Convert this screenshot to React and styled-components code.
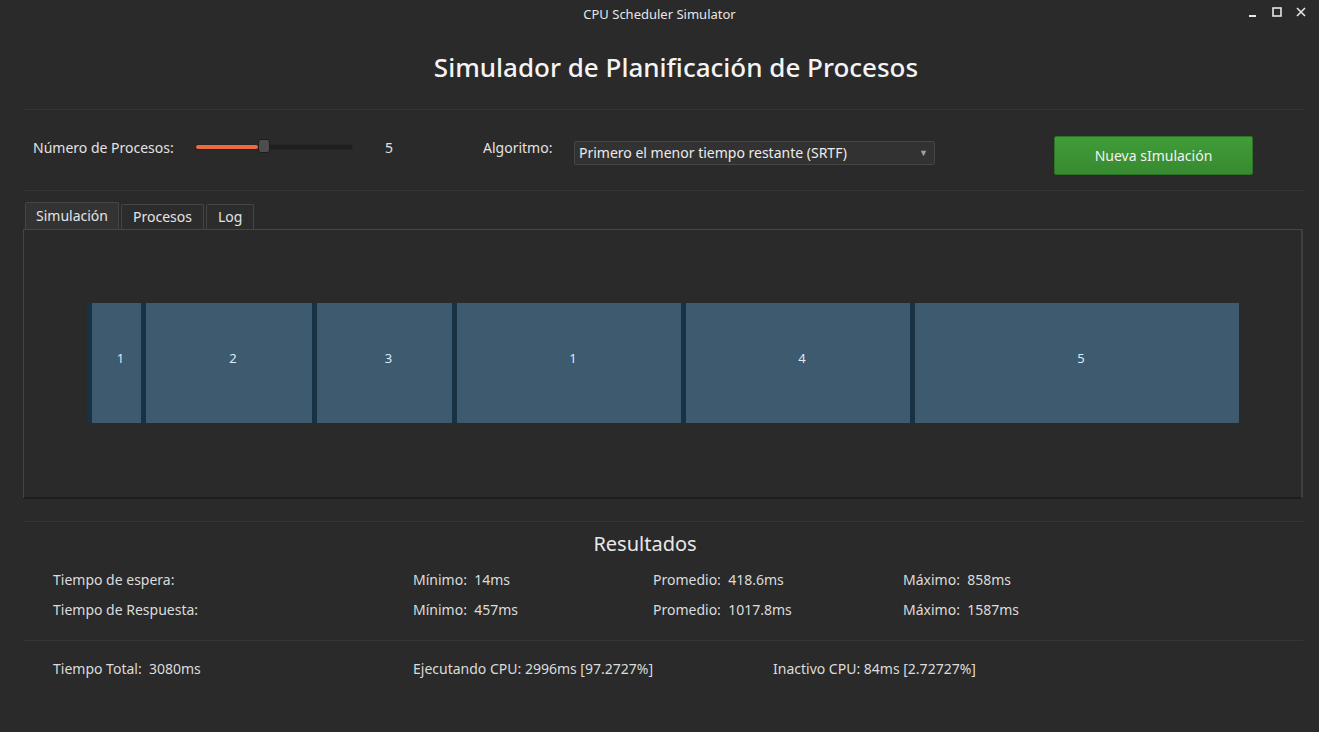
import React from 'react';
import styled, {createGlobalStyle} from 'styled-components';

const Global = createGlobalStyle`
body {
  margin: 0;
  background: #2a2a2a;
  font-family: "Noto Sans", "Open Sans", sans-serif;
  color: #dcdcdc;
}
`;

const Window = styled.div`
width: 1319px;
height: 732px;
background: #2a2a2a;
display: flex;
flex-direction: column;
overflow: hidden;
`;

const TitleBar = styled.div`
height: 28px;
display: flex;
align-items: center;
justify-content: center;
position: relative;
font-size: 13px;
color: #e6e6e6;
`;

const Controls = styled.div`
position: absolute;
right: 12px;
top: 6px;
display: flex;
gap: 12px;
align-items: center;
`;

const Content = styled.div`
flex: 1;
display: flex;
flex-direction: column;
padding: 0 16px 0 23px;
`;

const Heading = styled.h1`
margin: 0;
height: 81px;
padding: 0 0 4px 26px;
box-sizing: border-box;
display: flex;
align-items: center;
justify-content: center;
font-size: 26px;
font-weight: 500;
color: #f4f4f4;
`;

const Separator = styled.div`
height: 1px;
background: #353535;
`;

const ControlRow = styled.div`
height: 80px;
padding-bottom: 6px;
box-sizing: border-box;
display: flex;
align-items: center;
font-size: 14px;
`;

const Label = styled.span`
margin-left: ${p => p.$ml || 0}px;
width: ${p => p.$w ? p.$w + 'px' : 'auto'};
color: #e2e2e2;
`;

const SliderTrack = styled.div`
position: relative;
width: 156px;
height: 4px;
background: #1e1e1e;
border: 1px solid #262626;
border-radius: 2px;
`;

const SliderFill = styled.div`
height: 100%;
background: #ec6a3f;
border-radius: 2px;
`;

const SliderHandle = styled.div`
position: absolute;
top: -6px;
width: 12px;
height: 14px;
background: #4d4d4d;
border: 1px solid #1c1c1c;
border-radius: 3px;
box-sizing: border-box;
`;

const Select = styled.div`
width: 361px;
height: 24px;
margin: 11px 0 0 -2px;
box-sizing: border-box;
background: #323232;
border: 1px solid #464646;
border-radius: 2px;
display: flex;
align-items: center;
justify-content: space-between;
padding: 0 6px 0 4px;
color: #ececec;
`;

const Arrow = styled.span`
font-size: 9px;
color: #a0a0a0;
`;

const Button = styled.div`
margin: 17px 50px 0 auto;
width: 199px;
height: 39px;
box-sizing: border-box;
background: linear-gradient(#419c38, #378a30);
border: 1px solid #2c7526;
border-radius: 2px;
display: flex;
align-items: center;
justify-content: center;
color: #f2f2f2;
`;

const TabBar = styled.div`
margin-top: 10px;
height: 28px;
display: flex;
align-items: flex-end;
gap: 2px;
padding-left: 2px;
`;

const Tab = styled.div`
height: ${p => p.$active ? 27 : 25}px;
padding: 0 ${p => p.$pad}px 2px;
box-sizing: border-box;
display: flex;
align-items: center;
font-size: 14px;
background: ${p => p.$active ? '#333333' : '#2c2c2c'};
border: 1px solid #454545;
border-bottom: none;
border-radius: 2px 2px 0 0;
color: #e4e4e4;
`;

const Panel = styled.div`
height: 270px;
box-sizing: border-box;
border: 1px solid #464646;
border-bottom: 2px solid #1d1d1d;
border-right: 2px solid #3f3f3f;
display: flex;
align-items: center;
padding-left: 63px;
`;

const Gantt = styled.div`
display: flex;
height: 120px;
margin-top: -1px;
`;

const Block = styled.div`
height: 100%;
box-sizing: border-box;
border-left: 5px solid #183244;
background: #3d5a6e;
display: flex;
align-items: center;
justify-content: center;
padding: 0 0 10px 8px;
font-size: 13px;
color: #dbeaf6;
`;

const Results = styled.div`
margin-top: 22px;
`;

const SubHeading = styled.div`
height: 42px;
padding-right: 36px;
display: flex;
align-items: center;
justify-content: center;
font-size: 20px;
color: #e8e8e8;
`;

const StatRow = styled.div`
height: 30px;
display: grid;
grid-template-columns: 360px 240px 250px 1fr;
align-items: center;
padding-left: 30px;
font-size: 14px;
`;

const Spacer = styled.div`
height: 16px;
`;

const BottomRow = styled.div`
height: 54px;
display: grid;
grid-template-columns: 360px 360px 1fr;
align-items: center;
padding-left: 30px;
font-size: 14px;
`;

const blocks = [
  {id: 1, w: 54},
  {id: 2, w: 171},
  {id: 3, w: 140},
  {id: 1, w: 229},
  {id: 4, w: 229},
  {id: 5, w: 329},
];

const stats = [
  ['Tiempo de espera:', '14ms', '418.6ms', '858ms'],
  ['Tiempo de Respuesta:', '457ms', '1017.8ms', '1587ms'],
];

export default function App() {
  return (
    <Window>
      <Global />
      <TitleBar>
        CPU Scheduler Simulator
        <Controls>
          <svg width="12" height="12" viewBox="0 0 12 12"><rect x="2" y="9" width="7" height="2" fill="#e6e6e6" /></svg>
          <svg width="12" height="12" viewBox="0 0 12 12"><rect x="2" y="2" width="8" height="8" fill="none" stroke="#e6e6e6" strokeWidth="1.6" /></svg>
          <svg width="12" height="12" viewBox="0 0 12 12"><path d="M2 2 L10 10 M10 2 L2 10" stroke="#e6e6e6" strokeWidth="1.6" /></svg>
        </Controls>
      </TitleBar>
      <Content>
        <Heading>Simulador de Planificación de Procesos</Heading>
        <Separator />
        <ControlRow>
          <Label $ml={10} $w={162}>Número de Procesos:</Label>
          <SliderTrack>
            <SliderFill style={{width: '40%'}} />
            <SliderHandle style={{left: '62px'}} />
          </SliderTrack>
          <Label $ml={32} $w={98}>5</Label>
          <Label $w={93}>Algoritmo:</Label>
          <Select>
            Primero el menor tiempo restante (SRTF)
            <Arrow>▼</Arrow>
          </Select>
          <Button>Nueva sImulación</Button>
        </ControlRow>
        <Separator />
        <TabBar>
          <Tab $active $pad={10}>Simulación</Tab>
          <Tab $pad={11}>Procesos</Tab>
          <Tab $pad={11}>Log</Tab>
        </TabBar>
        <Panel>
          <Gantt>
            {blocks.map((b, i) => (
              <Block key={i} style={{width: b.w}}>{b.id}</Block>
            ))}
          </Gantt>
        </Panel>
        <Results>
          <Separator />
          <SubHeading>Resultados</SubHeading>
          {stats.map(s => (
            <StatRow key={s[0]}>
              <span>{s[0]}</span>
              <span>Mínimo:&nbsp; {s[1]}</span>
              <span>Promedio:&nbsp; {s[2]}</span>
              <span>Máximo:&nbsp; {s[3]}</span>
            </StatRow>
          ))}
          <Spacer />
          <Separator />
          <BottomRow>
            <span>Tiempo Total:&nbsp; 3080ms</span>
            <span>Ejecutando CPU: 2996ms [97.2727%]</span>
            <span>Inactivo CPU: 84ms [2.72727%]</span>
          </BottomRow>
        </Results>
      </Content>
    </Window>
  );
}
